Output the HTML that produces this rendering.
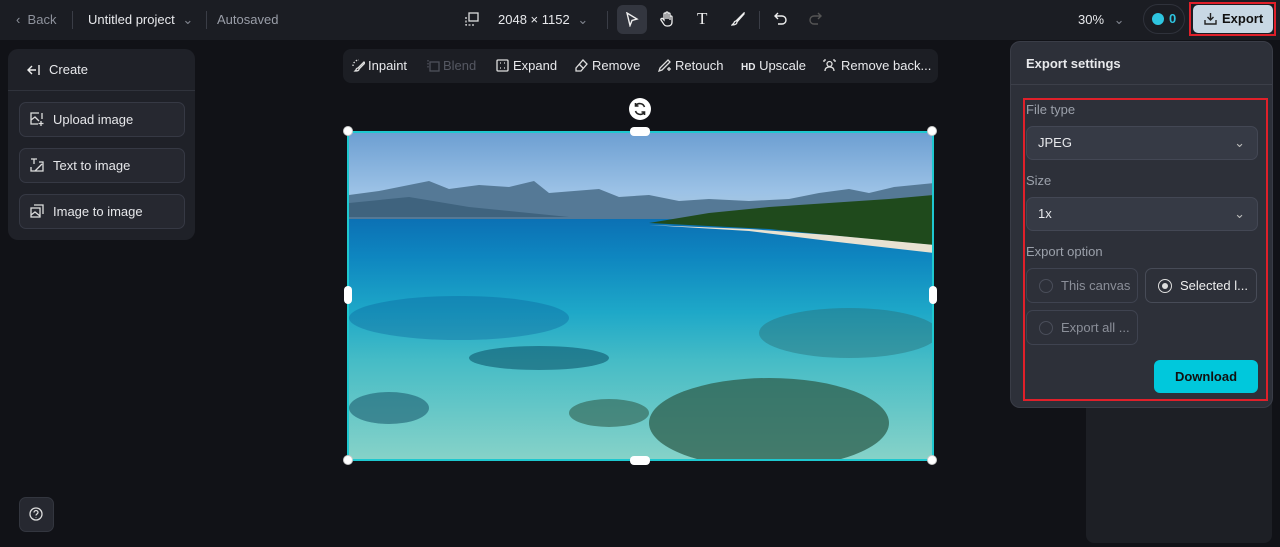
<!DOCTYPE html>
<html><head><meta charset="utf-8"><style>
*{box-sizing:border-box;margin:0;padding:0}
body{width:1280px;height:547px;overflow:hidden;background:#111217;font-family:"Liberation Sans",sans-serif;color:#e8e9ec;position:relative}
.top{position:absolute;left:0;top:0;width:1280px;height:40px;background:#1b1d23}
.a{position:absolute;white-space:nowrap}
.panel{position:absolute;left:8px;top:49px;width:187px;height:191px;background:#1f2128;border-radius:10px}
.btn{position:absolute;left:11px;width:166px;height:35px;border:1px solid #363944;background:#262830;border-radius:7px;font-size:13px;line-height:33px;padding-left:33px;color:#e6e7ea}
.tb{position:absolute;left:343px;top:49px;width:595px;height:34px;background:#1c1e24;border-radius:8px;font-size:13px}
.tb span{position:absolute;top:9px;white-space:nowrap}
.tb svg{position:absolute;top:10px}
.exp{position:absolute;left:1010px;top:41px;width:263px;height:367px;background:#2d3039;border-radius:10px;border:1px solid #3a3d47}
.sel{position:absolute;left:15px;width:232px;height:34px;background:#363a45;border:1px solid #434754;border-radius:7px;font-size:13px;line-height:32px;padding-left:11px}
.opt{position:absolute;width:112px;height:35px;border:1px solid #3f4350;border-radius:7px;font-size:13px;line-height:33px;padding-left:34px;color:#8b8f99}
.rad{position:absolute;left:12px;top:10px;width:14px;height:14px;border-radius:50%;border:1px solid #4a4e5a}
.h{position:absolute;width:10px;height:10px;border-radius:50%;background:#fff;border:1px solid #ccc}
</style></head><body>
<div class="top"></div>
<div class="a" style="left:16px;top:12px;font-size:13px;color:#8e929c">‹&nbsp; Back</div>
<div class="a" style="left:72px;top:11px;width:1px;height:18px;background:#3a3d46"></div>
<div class="a" style="left:88px;top:12px;font-size:13px;color:#e8e9ec">Untitled project <span style="color:#80848e;margin-left:4px">⌄</span></div>
<div class="a" style="left:206px;top:11px;width:1px;height:18px;background:#3a3d46"></div>
<div class="a" style="left:217px;top:12px;font-size:13px;color:#9a9ea8">Autosaved</div>
<svg class="a" style="left:465px;top:12px" width="14" height="14" viewBox="0 0 14 14" fill="none" stroke="#ddd" stroke-width="1.3"><rect x="4" y="1" width="9" height="8"/><path d="M1 5v8h8" stroke-dasharray="2 1.5"/></svg>
<div class="a" style="left:498px;top:12px;font-size:13px">2048 × 1152 <span style="color:#80848e;margin-left:4px">⌄</span></div>
<div class="a" style="left:607px;top:11px;width:1px;height:18px;background:#3a3d46"></div>
<div class="a" style="left:617px;top:5px;width:30px;height:29px;background:#33363f;border-radius:6px"></div>
<svg class="a" style="left:625px;top:12px" width="14" height="15" viewBox="0 0 14 15" fill="none" stroke="#eee" stroke-width="1.4"><path d="M2 1l10 6-5 1.5-2 5z"/></svg>
<svg class="a" style="left:660px;top:11px" width="14" height="16" viewBox="0 0 14 16" fill="none" stroke="#eee" stroke-width="1.3"><path d="M4 9V3a1 1 0 012 0v5V2a1 1 0 012 0v6V3a1 1 0 012 0v6-3a1 1 0 012 0v5c0 3-2 4-4 4H7c-2 0-3-1-4-3L1 9a1 1 0 012-1z"/></svg>
<div class="a" style="left:697px;top:9px;font-size:17px;font-family:'Liberation Serif',serif;color:#eee">T</div>
<svg class="a" style="left:731px;top:12px" width="14" height="14" viewBox="0 0 14 14" fill="none" stroke="#eee" stroke-width="1.3"><path d="M13 1L6 8l-1 1c-1 0-2 1-2 2l-2 2c3 0 5-1 5-3l7-8z"/></svg>
<div class="a" style="left:759px;top:11px;width:1px;height:18px;background:#3a3d46"></div>
<svg class="a" style="left:774px;top:12px" width="14" height="14" viewBox="0 0 14 14" fill="none" stroke="#eee" stroke-width="1.4"><path d="M4 1L1 4l3 3M1 4h7a4 4 0 010 8H4"/></svg>
<svg class="a" style="left:808px;top:12px" width="14" height="14" viewBox="0 0 14 14" fill="none" stroke="#555" stroke-width="1.4"><path d="M10 1l3 3-3 3M13 4H6a4 4 0 000 8h4"/></svg>
<div class="a" style="left:1078px;top:12px;font-size:13px">30% <span style="color:#80848e;margin-left:6px">⌄</span></div>
<div class="a" style="left:1143px;top:4px;width:42px;height:30px;border:1px solid #2f323b;border-radius:15px"></div>
<div class="a" style="left:1152px;top:13px;width:12px;height:12px;border-radius:50%;background:#2ec5e0"></div>
<div class="a" style="left:1169px;top:11px;font-size:13px;color:#2ec5e0;font-weight:bold">0</div>
<div class="a" style="left:1189px;top:2px;width:87px;height:34px;border:2px solid #e0202a"></div>
<div class="a" style="left:1193px;top:5px;width:80px;height:28px;background:#c8d8e4;border-radius:5px;color:#111;font-size:13px;font-weight:bold;line-height:28px;padding-left:29px">Export</div>
<svg class="a" style="left:1204px;top:12px" width="13" height="13" viewBox="0 0 13 13" fill="none" stroke="#222" stroke-width="1.4"><path d="M6.5 1v7M3.5 5l3 3 3-3M1 8v4h11V8"/></svg>

<div class="panel">
<svg class="a" style="left:19px;top:15px" width="14" height="12" viewBox="0 0 14 12" fill="none" stroke="#eee" stroke-width="1.4"><path d="M5 2L1 6l4 4M1 6h8M12 1v10"/></svg>
<div class="a" style="left:41px;top:13px;font-size:13px">Create</div>
<div class="a" style="left:0;top:41px;width:187px;height:1px;background:#30333c"></div>
<div class="btn" style="top:53px">Upload image</div>
<div class="btn" style="top:99px">Text to image</div>
<div class="btn" style="top:145px">Image to image</div>
<svg class="a" style="left:22px;top:63px" width="14" height="14" viewBox="0 0 14 14" fill="none" stroke="#ddd" stroke-width="1.3"><path d="M9 1H1v11h7M12 1v6M1 8l4-3 4 4"/><path d="M11 9v5M8.5 11.5h5"/></svg>
<svg class="a" style="left:22px;top:109px" width="14" height="14" viewBox="0 0 14 14" fill="none" stroke="#ddd" stroke-width="1.3"><path d="M1 1h6M4 1v5M9 4h4v9H1V9M5 13l7-7"/></svg>
<svg class="a" style="left:22px;top:155px" width="14" height="14" viewBox="0 0 14 14" fill="none" stroke="#ddd" stroke-width="1.3"><rect x="1" y="4" width="9" height="9"/><path d="M4 1h9v9M1 11l4-3 5 4"/></svg>
</div>

<div class="tb">
<svg style="left:9px" width="13" height="13" viewBox="0 0 13 13" fill="none" stroke="#ddd" stroke-width="1.3"><path d="M1 7a6 6 0 016-6" stroke-dasharray="1.5 1.5"/><path d="M12 3L6 9c-1 0-2 1-2 2l-1 1c2 0 4 0 4-2l6-6z"/></svg>
<span style="left:25px">Inpaint</span>
<svg style="left:84px" width="13" height="13" viewBox="0 0 13 13" fill="none" stroke="#4e515a" stroke-width="1.3"><rect x="3" y="3" width="9" height="9"/><path d="M1 1v9" stroke-dasharray="1.5 1.5"/></svg>
<span style="left:100px;color:#555862">Blend</span>
<svg style="left:153px" width="13" height="13" viewBox="0 0 13 13" fill="none" stroke="#ddd" stroke-width="1.3"><rect x="1" y="1" width="11" height="11" rx="1"/><path d="M4 4h1M8 4h1M4 9h1M8 9h1"/></svg>
<span style="left:170px">Expand</span>
<svg style="left:232px" width="13" height="13" viewBox="0 0 13 13" fill="none" stroke="#ddd" stroke-width="1.3"><path d="M8 1l4 4-6 7-5-0v-3z M4 5l4 4"/></svg>
<span style="left:249px">Remove</span>
<svg style="left:315px" width="13" height="13" viewBox="0 0 13 13" fill="none" stroke="#ddd" stroke-width="1.3"><path d="M10 1l2 2-8 8-3 1 1-3zM11 8v4M9 10h4"/></svg>
<span style="left:332px">Retouch</span>
<span style="left:398px"><b style="font-size:10px">HD</b> Upscale</span>
<svg style="left:480px" width="13" height="13" viewBox="0 0 13 13" fill="none" stroke="#ddd" stroke-width="1.3"><circle cx="6.5" cy="5" r="2.5"/><path d="M2 12c0-3 2-4 4.5-4s4.5 1 4.5 4M1 1h2M10 1h2M1 1v2M12 1v2"/></svg>
<span style="left:498px">Remove back...</span>
</div>

<div class="a" style="left:629px;top:98px;width:22px;height:22px;border-radius:50%;background:#fff"></div>
<svg class="a" style="left:633px;top:102px" width="14" height="14" viewBox="0 0 14 14" fill="none" stroke="#222" stroke-width="1.6"><path d="M11.5 5A5 5 0 002.5 4M2.5 9a5 5 0 009 1M2.5 1v3h3M11.5 13v-3h-3"/></svg>
<div class="a" style="left:347px;top:131px;width:587px;height:330px;border:2px solid #1ec8d0;overflow:hidden;background:linear-gradient(180deg,#6d9fd2 0%,#9cc2e6 18%,#a8c8e2 24%,#0b70b4 26%,#0e86c0 38%,#1ea8c8 55%,#46bcc6 70%,#86d2c8 100%)">
<svg style="position:absolute;left:0;top:0" width="587" height="330" viewBox="0 0 587 330">
<path d="M0 62L30 58 60 52 80 48 100 56 130 52 160 54 185 48 200 60 225 58 250 56 270 64 300 62 330 68 360 66 400 68 440 66 470 60 500 56 520 60 545 54 585 50V86H0z" fill="#557996"/>
<path d="M0 70L60 64 120 74 180 80 220 84 0 84z" fill="#3f637e"/>
<path d="M300 90L360 80 420 74 480 70 540 66 585 62V112L540 108 480 102 420 96 380 94z" fill="#1f4a1c"/>
<path d="M300 92L400 96 480 102 585 112V120L480 108 400 98z" fill="#e8e2d2"/>
<ellipse cx="190" cy="225" rx="70" ry="12" fill="#0a4e66" opacity=".55"/>
<ellipse cx="420" cy="290" rx="120" ry="45" fill="#2e5e4c" opacity=".75"/>
<ellipse cx="500" cy="200" rx="90" ry="25" fill="#2a6e78" opacity=".45"/>
<ellipse cx="260" cy="280" rx="40" ry="14" fill="#2e5e4c" opacity=".6"/>
<ellipse cx="40" cy="275" rx="40" ry="16" fill="#1d5e70" opacity=".6"/>
<ellipse cx="110" cy="185" rx="110" ry="22" fill="#0a5c98" opacity=".35"/>
</svg>
</div>
<div class="h" style="left:343px;top:126px"></div><div class="h" style="left:927px;top:126px"></div>
<div class="h" style="left:343px;top:455px"></div><div class="h" style="left:927px;top:455px"></div>
<div class="a" style="left:630px;top:127px;width:20px;height:9px;background:#fff;border-radius:4px"></div>
<div class="a" style="left:630px;top:456px;width:20px;height:9px;background:#fff;border-radius:4px"></div>
<div class="a" style="left:344px;top:286px;width:8px;height:18px;background:#fff;border-radius:4px"></div>
<div class="a" style="left:929px;top:286px;width:8px;height:18px;background:#fff;border-radius:4px"></div>

<div class="a" style="left:1086px;top:390px;width:186px;height:153px;background:#1d1f25;border-radius:8px"></div>
<div class="exp">
<div class="a" style="left:15px;top:14px;font-size:13px;font-weight:bold">Export settings</div>
<div class="a" style="left:0;top:42px;width:261px;height:1px;background:#3c3f49"></div>
<div class="a" style="left:12px;top:56px;width:245px;height:303px;border:2px solid #e0202a"></div>
<div class="a" style="left:15px;top:60px;font-size:13px;color:#9ba0aa">File type</div>
<div class="sel" style="top:84px">JPEG<span style="position:absolute;right:12px;color:#bbb">⌄</span></div>
<div class="a" style="left:15px;top:131px;font-size:13px;color:#9ba0aa">Size</div>
<div class="sel" style="top:155px">1x<span style="position:absolute;right:12px;color:#bbb">⌄</span></div>
<div class="a" style="left:15px;top:202px;font-size:13px;color:#9ba0aa">Export option</div>
<div class="opt" style="left:15px;top:226px"><div class="rad"></div>This canvas</div>
<div class="opt" style="left:134px;top:226px;color:#eee;border-color:#474b57"><div class="rad" style="border-color:#ddd"><div style="width:6px;height:6px;background:#ddd;border-radius:50%;margin:3px"></div></div>Selected l...</div>
<div class="opt" style="left:15px;top:268px"><div class="rad"></div>Export all ...</div>
<div class="a" style="left:143px;top:318px;width:104px;height:33px;background:#00c8dc;border-radius:6px;color:#111;font-weight:bold;font-size:13px;text-align:center;line-height:33px">Download</div>
</div>

<div class="a" style="left:19px;top:497px;width:35px;height:35px;background:#262830;border:1px solid #33363f;border-radius:7px"></div>
<svg class="a" style="left:29px;top:507px" width="14" height="14" viewBox="0 0 14 14" fill="none" stroke="#ddd" stroke-width="1.3"><circle cx="7" cy="7" r="6"/><path d="M5 5.5a2 2 0 114 0c0 1.2-2 1.5-2 3M7 10.5v.5"/></svg>
</body></html>
